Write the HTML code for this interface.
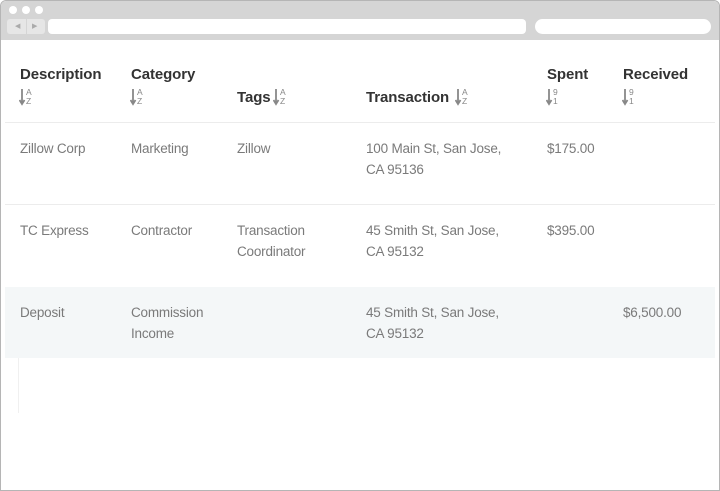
<!DOCTYPE html>
<html><head><style>
*{margin:0;padding:0;box-sizing:border-box}
body{width:720px;height:491px;background:#fff;font-family:"Liberation Sans",sans-serif;position:relative;overflow:hidden}
.frame{position:absolute;left:0;top:0;width:720px;height:491px;border:1px solid #b5b5b5;border-radius:6px 6px 0 0}
.bar{position:absolute;left:1px;top:1px;width:718px;height:39px;background:#d5d5d5;border-radius:5px 5px 0 0}
.dot{position:absolute;top:5px;width:8px;height:8px;border-radius:50%;background:#fff}
.nav{position:absolute;left:6px;top:18px;width:38px;height:15px;background:#e6e6e6;border-radius:3px;font-size:7px;color:#aaa;line-height:15px}
.url{position:absolute;top:18px;height:15px;background:#fff;border-radius:4px}
.t{position:absolute;font-size:13.5px;color:#7a7a7a;line-height:21px;letter-spacing:-0.2px}
.h{position:absolute;font-size:15px;font-weight:bold;color:#333;letter-spacing:-0.1px}
.s{position:absolute;width:14px;height:18px}
.s svg{position:absolute;left:0;top:0}
.s i{position:absolute;left:7px;top:0;font-style:normal;font-size:8.5px;line-height:8.5px;color:#888}
.line{position:absolute;left:5px;width:710px;height:1px;background:#ececec}
</style></head><body>
<div class="frame"></div>
<div class="bar">
<div class="dot" style="left:8px"></div><div class="dot" style="left:21px"></div><div class="dot" style="left:34px"></div>
<div class="nav"><span style="position:absolute;left:8px">◀</span><span style="position:absolute;left:19px;top:0;width:1px;height:15px;background:#d5d5d5"></span><span style="position:absolute;left:25px">▶</span></div>
<div class="url" style="left:47px;width:478px"></div>
<div class="url" style="left:534px;width:176px;border-radius:8px"></div>
</div>

<div class="h" style="left:20px;top:66px">Description</div>
<div class="h" style="left:131px;top:66px">Category</div>
<div class="h" style="left:237px;top:89px">Tags</div>
<div class="h" style="left:366px;top:89px">Transaction</div>
<div class="h" style="left:547px;top:66px">Spent</div>
<div class="h" style="left:623px;top:66px">Received</div>

<div class="s" style="left:19px;top:88px"><svg width="7" height="18"><path d="M3 1V15M0.5 12L3 16L5.5 12" stroke="#888" stroke-width="1.8" fill="none"/></svg><i>A<br>Z</i></div>
<div class="s" style="left:130px;top:88px"><svg width="7" height="18"><path d="M3 1V15M0.5 12L3 16L5.5 12" stroke="#888" stroke-width="1.8" fill="none"/></svg><i>A<br>Z</i></div>
<div class="s" style="left:273px;top:88px"><svg width="7" height="18"><path d="M3 1V15M0.5 12L3 16L5.5 12" stroke="#888" stroke-width="1.8" fill="none"/></svg><i>A<br>Z</i></div>
<div class="s" style="left:455px;top:88px"><svg width="7" height="18"><path d="M3 1V15M0.5 12L3 16L5.5 12" stroke="#888" stroke-width="1.8" fill="none"/></svg><i>A<br>Z</i></div>
<div class="s" style="left:546px;top:88px"><svg width="7" height="18"><path d="M3 1V15M0.5 12L3 16L5.5 12" stroke="#888" stroke-width="1.8" fill="none"/></svg><i>9<br>1</i></div>
<div class="s" style="left:622px;top:88px"><svg width="7" height="18"><path d="M3 1V15M0.5 12L3 16L5.5 12" stroke="#888" stroke-width="1.8" fill="none"/></svg><i>9<br>1</i></div>

<div class="line" style="top:122px"></div>
<div class="t" style="left:20px;top:138px">Zillow Corp</div>
<div class="t" style="left:131px;top:138px">Marketing</div>
<div class="t" style="left:237px;top:138px">Zillow</div>
<div class="t" style="left:366px;top:138px">100 Main St, San Jose,<br>CA 95136</div>
<div class="t" style="left:547px;top:138px">$175.00</div>

<div class="line" style="top:204px"></div>
<div class="t" style="left:20px;top:220px">TC Express</div>
<div class="t" style="left:131px;top:220px">Contractor</div>
<div class="t" style="left:237px;top:220px">Transaction<br>Coordinator</div>
<div class="t" style="left:366px;top:220px">45 Smith St, San Jose,<br>CA 95132</div>
<div class="t" style="left:547px;top:220px">$395.00</div>

<div style="position:absolute;left:5px;top:287px;width:710px;height:71px;background:#f4f7f8"></div>
<div class="t" style="left:20px;top:302px">Deposit</div>
<div class="t" style="left:131px;top:302px">Commission<br>Income</div>
<div class="t" style="left:366px;top:302px">45 Smith St, San Jose,<br>CA 95132</div>
<div class="t" style="left:623px;top:302px">$6,500.00</div>
<div style="position:absolute;left:18px;top:358px;width:1px;height:55px;background:#f0f0f0"></div>
</body></html>
